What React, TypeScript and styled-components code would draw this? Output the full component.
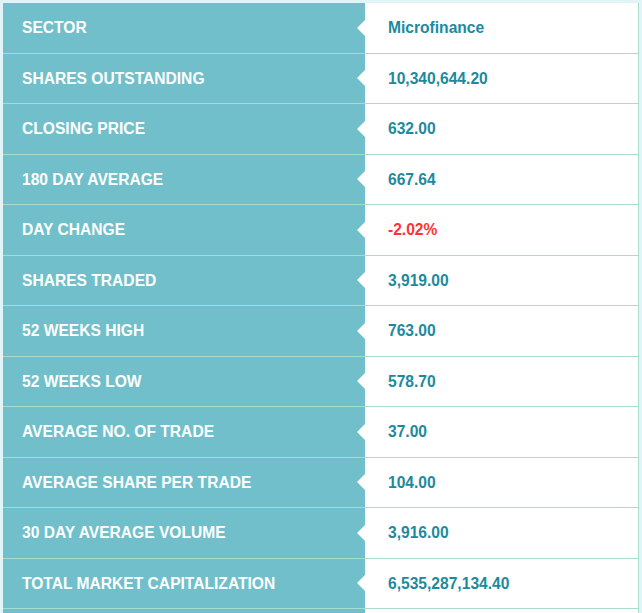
import React from "react";
import styled, { createGlobalStyle } from "styled-components";

const GlobalStyle = createGlobalStyle`
  html, body {
    margin: 0;
    padding: 0;
    background: #e0f5f8;
    font-family: "Liberation Sans", Arial, sans-serif;
  }
`;

const Page = styled.div`
  padding: 3px 3px 0 3px;
`;

const Table = styled.div`
  width: 636px;
  background: #ffffff;
  border-right: 1px solid #a8dccd;
  box-sizing: border-box;
`;

const Row = styled.div`
  display: grid;
  grid-template-columns: 362px 1fr;
  height: 50.5px;
  box-sizing: border-box;
  border-bottom: 1px solid #a8dccd;
`;

const Label = styled.div`
  position: relative;
  display: flex;
  align-items: center;
  padding: 1px 0 0 19px;
  background: #70bfca;
  color: #ffffff;
  font-weight: bold;
  font-size: 15.6px;
  text-transform: uppercase;

  &::after {
    content: "";
    position: absolute;
    right: 0;
    top: 50%;
    margin-top: -8px;
    border-style: solid;
    border-width: 8px 8px 8px 0;
    border-color: transparent #ffffff transparent transparent;
  }
`;

const Value = styled.div<{ $negative?: boolean }>`
  display: flex;
  align-items: center;
  padding: 1px 0 0 23px;
  color: ${(p) => (p.$negative ? "#ff3333" : "#1c8a9e")};
  font-weight: bold;
  font-size: 15.6px;
`;

const rows: { label: string; value: string; negative?: boolean }[] = [
  { label: "Sector", value: "Microfinance" },
  { label: "Shares Outstanding", value: "10,340,644.20" },
  { label: "Closing Price", value: "632.00" },
  { label: "180 Day Average", value: "667.64" },
  { label: "Day Change", value: "-2.02%", negative: true },
  { label: "Shares Traded", value: "3,919.00" },
  { label: "52 Weeks High", value: "763.00" },
  { label: "52 Weeks Low", value: "578.70" },
  { label: "Average No. of Trade", value: "37.00" },
  { label: "Average Share Per Trade", value: "104.00" },
  { label: "30 Day Average Volume", value: "3,916.00" },
  { label: "Total Market Capitalization", value: "6,535,287,134.40" },
  { label: "", value: "" },
];

export default function App() {
  return (
    <>
      <GlobalStyle />
      <Page>
        <Table>
          {rows.map((r, i) => (
            <Row key={i}>
              <Label>{r.label}</Label>
              <Value $negative={r.negative}>{r.value}</Value>
            </Row>
          ))}
        </Table>
      </Page>
    </>
  );
}
